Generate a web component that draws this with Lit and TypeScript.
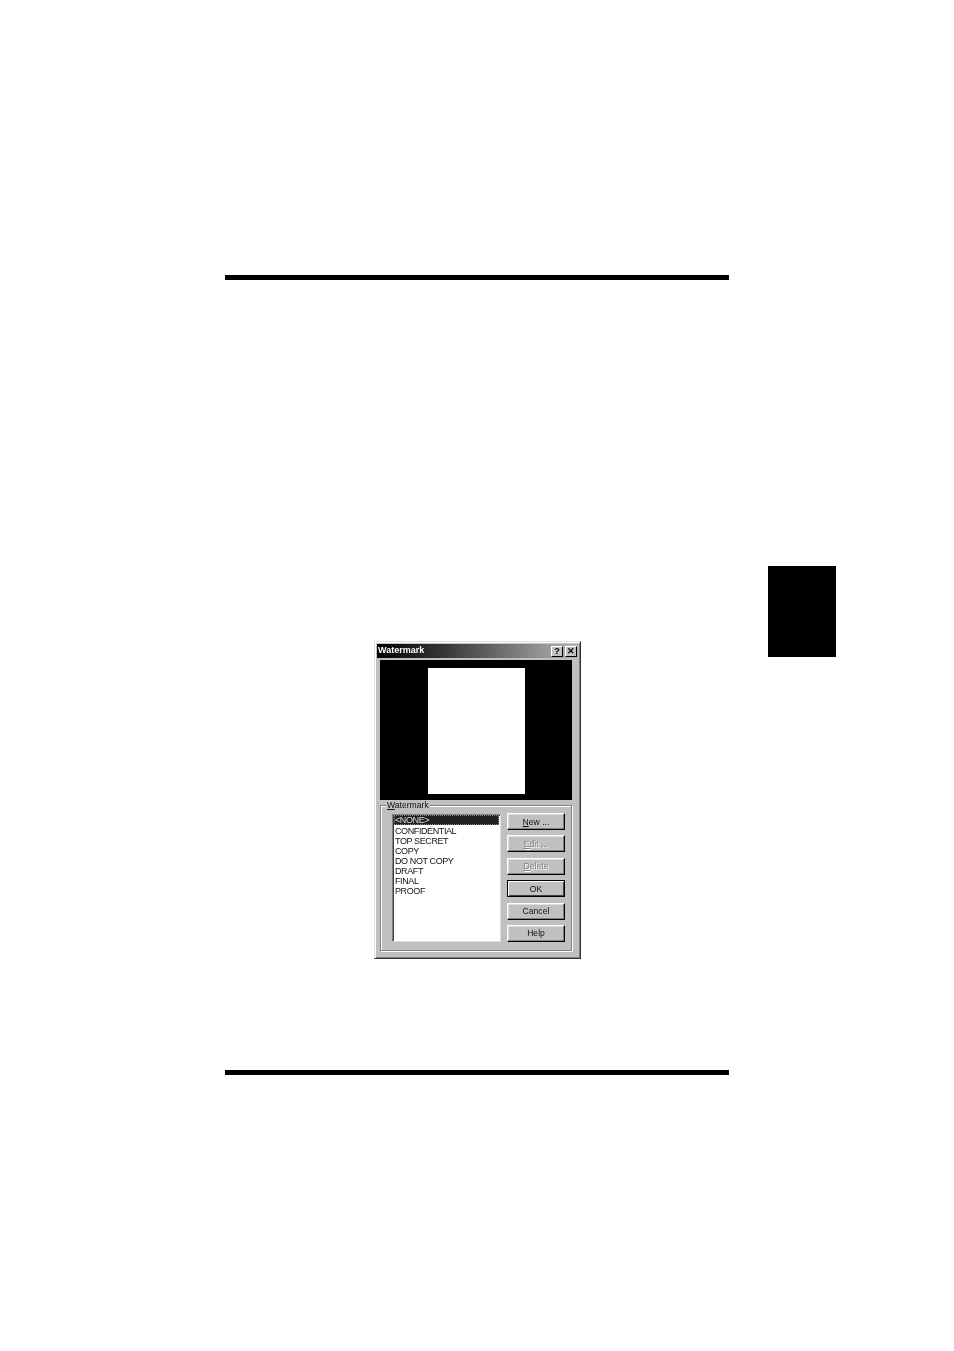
import { LitElement, html, css } from "lit";
import { customElement } from "lit/decorators.js";

const ITEMS = ["<NONE>", "CONFIDENTIAL", "TOP SECRET", "COPY", "DO NOT COPY", "DRAFT", "FINAL", "PROOF"];

@customElement("app-root")
export class AppRoot extends LitElement {
  static styles = css`
    :host { display: block; background: #fff; width: 954px; height: 1351px; overflow: hidden; font-family: "Liberation Sans", Arial, sans-serif; color: #000; }
    .page { padding-top: 275px; }
    .rule { width: 504px; height: 5px; margin-left: 225px; background: #000; }
    .body { height: 790px; box-sizing: border-box; padding-top: 286px; display: flex; align-items: flex-start; }
    .tab { width: 68px; height: 91px; margin-left: 187px; background: #000; }
    .dialog { width: 207px; height: 318px; margin-left: 374px; margin-top: 75px; box-sizing: border-box; background: #c0c0c0; border: 1px solid; border-color: #dfdfdf #303030 #303030 #dfdfdf; box-shadow: inset 1px 1px 0 #fff, inset -1px -1px 0 #808080; padding: 2px; display: flex; flex-direction: column; will-change: transform; }
    .title { height: 14px; display: flex; align-items: center; padding: 0 1px 0 1px; background: linear-gradient(90deg, #000 0%, #3a3a3a 35%, #9a9a9a 85%, #b4b4b4 100%); color: #fff; font-size: 9px; font-weight: bold; line-height: 10px; }
    .title span { flex: 1; position: relative; top: -1px; }
    .tbtn { width: 12px; height: 11px; box-sizing: border-box; background: #c0c0c0; border: 1px solid; border-color: #fff #000 #000 #fff; color: #000; display: flex; align-items: center; justify-content: center; font-size: 9px; font-weight: bold; line-height: 1; }
    .tbtn + .tbtn { margin-left: 2px; }
    .preview { width: 192px; height: 140px; margin: 2px 0 0 3px; box-sizing: border-box; background: #000; padding: 8px 0 0 48px; }
    .sheet { width: 97px; height: 126px; background: #fff; }
    .group { position: relative; width: 192px; height: 146px; margin: 5px 0 0 3px; box-sizing: border-box; border: 1px solid #808080; box-shadow: 1px 1px 0 #fff, inset 1px 1px 0 #fff; display: flex; padding: 8px 6px 0 11px; }
    .legend { position: absolute; left: 5px; top: -6px; padding: 0 1px; background: #c0c0c0; font-size: 8.6px; line-height: 10px; color: #111; }
    u { text-decoration: underline; }
    .list { width: 109px; height: 128px; box-sizing: border-box; background: #fff; border: 1px solid; border-color: #808080 #dfdfdf #dfdfdf #808080; box-shadow: inset 1px 1px 0 #404040; padding: 0 1px 0 1px; font-size: 9px; letter-spacing: -0.4px; color: #111; }
    .item { height: 10px; line-height: 12px; padding-left: 1px; white-space: pre; }
    .item.sel { line-height: 10px; background: #222; color: #ddd; outline: 1px dotted #888; outline-offset: -1px; }
    .buttons { margin: -1px 0 0 6px; width: 58px; display: flex; flex-direction: column; gap: 5.4px; }
    .btn { height: 17px; box-sizing: border-box; background: #c0c0c0; border: 1px solid; border-color: #fff #000 #000 #fff; box-shadow: inset -1px -1px 0 #808080, inset 1px 1px 0 #dfdfdf; display: flex; align-items: center; justify-content: center; font-size: 8.6px; color: #111; }
    .btn.dis { color: #808080; text-shadow: 1px 1px 0 #fff; }
    .btn.def { border-color: #000; box-shadow: inset 1px 1px 0 #fff, inset -1px -1px 0 #404040; }
  `;
  render() {
    return html`
      <div class="page">
        <div class="rule"></div>
        <div class="body">
          <div class="dialog">
            <div class="title"><span>Watermark</span><div class="tbtn">?</div><div class="tbtn">✕</div></div>
            <div class="preview"><div class="sheet"></div></div>
            <div class="group">
              <div class="legend"><u>W</u>atermark</div>
              <div class="list">
                ${ITEMS.map((t, i) => html`<div class="item ${i === 0 ? "sel" : ""}">${t}</div>`)}
              </div>
              <div class="buttons">
                <div class="btn"><span><u>N</u>ew ...</span></div>
                <div class="btn dis"><span><u>E</u>dit ...</span></div>
                <div class="btn dis"><span><u>D</u>elete</span></div>
                <div class="btn def">OK</div>
                <div class="btn">Cancel</div>
                <div class="btn">Help</div>
              </div>
            </div>
          </div>
          <div class="tab"></div>
        </div>
        <div class="rule"></div>
      </div>
    `;
  }
}
